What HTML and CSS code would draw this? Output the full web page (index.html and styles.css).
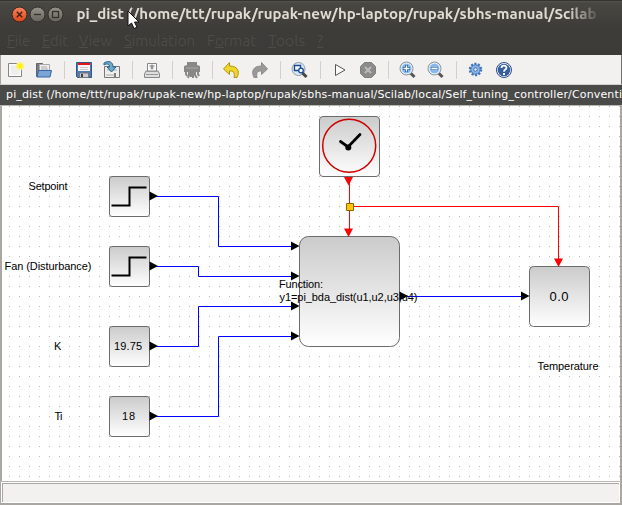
FILE: index.html
```html
<!DOCTYPE html>
<html lang="en">
<head>
<meta charset="utf-8">
<title>pi_dist</title>
<link rel="stylesheet" href="styles.css">
</head>
<body>
<div class="window">
  <header class="chrome">
    <div class="titlebar">
      <div class="controls">
        <svg width="62" height="20" viewBox="0 0 62 20">
          <defs>
            <linearGradient id="orange" x2="0" y2="1"><stop stop-color="#f58560"/><stop offset="1" stop-color="#dc4518"/></linearGradient>
            <linearGradient id="grey" x2="0" y2="1"><stop stop-color="#95938b"/><stop offset="1" stop-color="#65635c"/></linearGradient>
          </defs>
          <circle cx="12.500" cy="10.500" r="7.500" fill="url(#orange)" stroke="#30261f"/>
          <path d="M9.800 7.800l5.400 5.400M15.200 7.800l-5.400 5.400" stroke="#48200f" stroke-width="1.500"/>
          <circle cx="30.500" cy="10.500" r="7.500" fill="url(#grey)" stroke="#302f2b"/>
          <path d="M27 10.500h7" stroke="#33322d" stroke-width="1.300"/>
          <circle cx="48.500" cy="10.500" r="7.500" fill="url(#grey)" stroke="#302f2b"/>
          <rect x="45.500" y="7.500" width="6" height="6" fill="none" stroke="#33322d" stroke-width="1.300"/>
        </svg>
      </div>
      <svg class="title" width="525" height="27"><text x="-0.500" y="18" textLength="520" lengthAdjust="spacingAndGlyphs">pi_dist (/home/ttt/rupak/rupak-new/hp-laptop/rupak/sbhs-manual/Scilab</text></svg>
    </div>
    <svg class="menu" width="340" height="27">
      <g>
        <text x="7" y="18" textLength="23" lengthAdjust="spacingAndGlyphs">File</text>
        <text x="42" y="18" textLength="26" lengthAdjust="spacingAndGlyphs">Edit</text>
        <text x="79" y="18" textLength="33" lengthAdjust="spacingAndGlyphs">View</text>
        <text x="124" y="18" textLength="71" lengthAdjust="spacingAndGlyphs">Simulation</text>
        <text x="207" y="18" textLength="49" lengthAdjust="spacingAndGlyphs">Format</text>
        <text x="268" y="18" textLength="37" lengthAdjust="spacingAndGlyphs">Tools</text>
        <text x="317" y="18" textLength="6" lengthAdjust="spacingAndGlyphs">?</text>
      </g>
      <path d="M7 19.500h8M42 19.500h8M79 19.500h9M124 19.500h8M215 19.500h9M268 19.500h8M317 19.500h6" stroke="#4d4c48"/>
    </svg>
    <svg class="pointer" width="15" height="20" viewBox="0 0 15 20"><path d="M1 1v15l3.500-3 2.500 5.500 3-1.300-2.500-5.200h4.500z" fill="#fff" stroke="#111"/></svg>
  </header>

  <nav class="toolbar">
    <svg class="icon" viewBox="0 0 20 20"><path d="M2.500 3.500h13v13h-13z" fill="#fafafa" stroke="#858585"/><path d="M4.500 5.500h9v9h-9z" fill="#eee"/><circle cx="14" cy="6" r="4" fill="#fbf17a"/><circle cx="14" cy="6" r="2.200" fill="#fff200"/></svg>
    <svg class="icon" viewBox="0 0 20 20"><path d="M2.500 16.500v-13h6l1 2h5v11z" fill="#777b7c" stroke="#626667"/><path d="M5.500 4.500h10v7h-10z" fill="#eee" stroke="#aaa"/><path d="M7 7h6M7 9h7" stroke="#aaa"/><path d="M4.500 10.500h13l-1.500 6.500H3z" fill="#7aa5d6" stroke="#3465a4"/></svg>
    <i class="sep"></i>
    <svg class="icon" viewBox="0 0 20 20"><path d="M2.500 2.500h15v15h-14l-1-1z" fill="#5379ae" stroke="#315786"/><path d="M4 3h12v8H4z" fill="#f5f5f5"/><path d="M4 3h12v2H4z" fill="#e41616"/><path d="M6 7.500h8M6 9.500h8" stroke="#ccc"/><path d="M5.500 13h9v4.500h-9z" fill="#ccc" stroke="#777"/><path d="M7 14h2v3H7z" fill="#345"/></svg>
    <svg class="icon" viewBox="0 0 20 20"><path d="M2.500 6.500h15v11h-15z" fill="#eee" stroke="#777"/><path d="M5 10h10M4 15h8" stroke="#aaa"/><path d="M13 13v4" stroke="#111"/><path d="M2 3c5-3 9-1 9 4h3l-4.500 5L5 7h2.500C7.500 4 5 3 2 5z" fill="#6faac9" stroke="#24658b"/></svg>
    <i class="sep"></i>
    <svg class="icon" viewBox="0 0 20 20"><path d="M5.500 3.500h9v9h-9z" fill="#fafafa" stroke="#888"/><path d="M7.500 6h5M8.500 8h3M10 4.500v5" stroke="#777"/><path d="M4 11h12l1.500 3v3.500h-15V14z" fill="#ddd" stroke="#888"/><path d="M5 11.500h10M4 14.500h12" stroke="#999"/></svg>
    <i class="sep"></i>
    <svg class="icon" viewBox="0 0 20 20"><path d="M5 2h10v3l3 1v6H2V6l3-1z" fill="#888"/><path d="M4 8h12" stroke="#aaa"/><path d="M4 11v3l1 2M7 11v4l-1 3M9 11v6M11 11v7M13 11v4l2 3M16 11v3l1 2" fill="none" stroke="#888" stroke-width="2"/></svg>
    <i class="sep"></i>
    <svg class="icon" viewBox="0 0 20 20"><path d="M7.500 2.500L1.500 9l6 5.500v-3.500c4-.5 5.500 1.500 4.500 6.500h3c3-6 1-11.500-7.500-11.500z" fill="#edd72c" stroke="#b39208"/></svg>
    <svg class="icon" viewBox="0 0 20 20"><path d="M11.500 2.500l6 6.500-6 5.500v-3.500c-4-.5-5.500 1.500-4.500 6.500H4C1 11.500 3 6 11.500 6z" fill="#999" stroke="#8b8b8b"/></svg>
    <i class="sep"></i>
    <svg class="icon" viewBox="0 0 20 20"><circle cx="8.500" cy="9" r="6.500" fill="#d8e8f8" stroke="#929ca4"/><path d="M12.500 13l4 4" stroke="#444" stroke-width="3"/><path d="M4.500 5.500h6v5h-6z" fill="#fff" stroke="#174a93" stroke-width="1.400"/><circle cx="11" cy="10.500" r="2.300" fill="#fff" stroke="#174a93" stroke-width="1.300"/></svg>
    <i class="sep"></i>
    <svg class="icon" viewBox="0 0 20 20"><path d="M5.500 4.500v11L15 10z" fill="#fff" stroke="#555"/></svg>
    <svg class="icon" viewBox="0 0 20 20"><path d="M6.500 2.500h7l4 4v7l-4 4h-7l-4-4v-7z" fill="#8b8b8b" stroke="#808080"/><path d="M7 7l6 6M13 7l-6 6" stroke="#bbb" stroke-width="2"/></svg>
    <i class="sep"></i>
    <svg class="icon" viewBox="0 0 20 20"><path d="M12.500 13l4 4" stroke="#555" stroke-width="3"/><circle cx="8.500" cy="8.500" r="6.500" fill="#dcedfb" stroke="#8d9499"/><circle cx="8.500" cy="8.500" r="4.800" fill="#88b8e8"/><path d="M8.500 5v7M5 8.500h7" stroke="#2461a8" stroke-width="3"/><path d="M8.500 5.500v6M5.500 8.500h6" stroke="#fff" stroke-width="1.300"/></svg>
    <svg class="icon" viewBox="0 0 20 20"><path d="M12.500 13l4 4" stroke="#555" stroke-width="3"/><circle cx="8.500" cy="8.500" r="6.500" fill="#dcedfb" stroke="#8d9499"/><circle cx="8.500" cy="8.500" r="4.800" fill="#88b8e8"/><path d="M5 8.500h7" stroke="#4b84c4" stroke-width="3"/><path d="M5.500 8.500h6" stroke="#fff" stroke-width="1.500"/></svg>
    <i class="sep"></i>
    <svg class="icon" viewBox="0 0 20 20"><circle cx="9.500" cy="9.500" r="5.500" fill="none" stroke="#3d73bb" stroke-width="2.500" stroke-dasharray="2 1.455"/><circle cx="9.500" cy="9.500" r="4.700" fill="#8bb4e4" stroke="#3d73bb"/><circle cx="9.500" cy="9.500" r="1.700" fill="#f2f1f0" stroke="#3d73bb"/></svg>
    <svg class="icon" viewBox="0 0 20 20"><circle cx="10" cy="10" r="7.500" fill="#fff" stroke="#24498a"/><circle cx="10" cy="10" r="6.300" fill="#365f9f"/><path d="M7.500 8c0-3 5-3 5-.3 0 2-2.500 1.700-2.500 4" fill="none" stroke="#fff" stroke-width="1.800"/><path d="M9 13h2v2H9z" fill="#fff"/></svg>
  </nav>

  <svg class="path" width="622" height="20"><text x="6" y="13" textLength="616">pi_dist (/home/ttt/rupak/rupak-new/hp-laptop/rupak/sbhs-manual/Scilab/local/Self_tuning_controller/Conventi</text></svg>

  <main class="canvas">
    <svg class="diagram" width="618" height="375" viewBox="2 106 618 375">
      <defs>
        <pattern id="grid" x="9" y="106" width="10" height="10" patternUnits="userSpaceOnUse"><path d="M0 0h1v1H0z" fill="#b9b9b9"/></pattern>
        <linearGradient id="block" x2="0" y2="1"><stop stop-color="#cbcbcb"/><stop offset="1" stop-color="#fff"/></linearGradient>
        <path id="right" d="M0-4.500L8.500 0 0 4.500z"/>
        <path id="down" d="M-4.500 0h9L0 8.500z" fill="#f00"/>
        <path id="step" d="M2.500 29.500h18v-18h17" fill="none" stroke="#000" stroke-width="2"/>
      </defs>
      <rect x="2" y="106" width="618" height="375" fill="url(#grid)"/>
      <g class="block">
        <rect x="109.500" y="176.500" width="40" height="40" rx="2.500"/>
        <rect x="109.500" y="246.500" width="40" height="40" rx="2.500"/>
        <rect x="109.500" y="326.500" width="40" height="40" rx="2.500"/>
        <rect x="109.500" y="396.500" width="40" height="40" rx="2.500"/>
        <rect x="319.500" y="116.500" width="60" height="60" rx="3.500"/>
        <rect x="299.500" y="236.500" width="100" height="110" rx="9"/>
        <rect x="529.500" y="266.500" width="60" height="60" rx="4"/>
      </g>
      <use href="#step" x="109" y="176"/>
      <use href="#step" x="109" y="246"/>
      <circle cx="349.200" cy="145.800" r="26.500" fill="none" stroke="#cf0000" stroke-width="1.500"/>
      <path d="M340.500 141.500l7.500 5.500 12-12.500" fill="none" stroke="#000" stroke-width="2.800" stroke-linecap="round"/>
      <circle cx="348.300" cy="147.500" r="3"/>
      <g fill="none" stroke="#00f">
        <path d="M156 196.500h62.500v50H292M156 266.500h42.500v10H292M156 346.500h42.500v-40H292M156 416.500h62.500v-80H292M407 296.500h115"/>
        <path d="M349.500 180v50M349.500 206.500h209V260" stroke="#f00"/>
      </g>
      <g>
        <use href="#right" x="149.500" y="196"/><use href="#right" x="149.500" y="266"/>
        <use href="#right" x="149.500" y="346"/><use href="#right" x="149.500" y="416"/>
        <use href="#right" x="291" y="246"/><use href="#right" x="291" y="276"/>
        <use href="#right" x="291" y="306"/><use href="#right" x="291" y="336"/>
        <use href="#right" x="399.500" y="296"/><use href="#right" x="521" y="296"/>
        <use href="#down" x="348.500" y="177"/><use href="#down" x="348.500" y="228.500"/><use href="#down" x="558.500" y="258.500"/>
      </g>
      <path d="M346.500 203.500h7v7h-7z" fill="#ffc400" stroke="#8a6800"/>
      <g class="label">
        <text x="28.500" y="190" textLength="39">Setpoint</text>
        <text x="4.500" y="270" textLength="87">Fan (Disturbance)</text>
        <text x="54" y="350">K</text>
        <text x="54.500" y="420" textLength="8">Ti</text>
        <text x="114" y="350" textLength="28">19.75</text>
        <text x="122" y="420" textLength="13">18</text>
        <text x="279" y="288" textLength="44">Function:</text>
        <text x="279.500" y="301" textLength="138">y1=pi_bda_dist(u1,u2,u3,u4)</text>
        <text x="537.500" y="370" textLength="61">Temperature</text>
        <text class="value" x="549.500" y="301" textLength="19">0.0</text>
      </g>
    </svg>
  </main>
  <footer class="status"></footer>
</div>
</body>
</html>
```

FILE: styles.css
```css
* { box-sizing: border-box; }
body { margin: 0; overflow: hidden; background: #3c3b37; }
svg { display: block; }
.window { width: 622px; height: 505px; display: flex; flex-direction: column; background: #aaa7a3; }
.chrome { position: relative; height: 55px; background: linear-gradient(#55534d 0, #484742 2px, #3d3c38 28px, #3c3b37); border-top: 1px solid #353430; }
.titlebar { display: flex; height: 27px; }
.controls { width: 77px; padding: 3px 0 0 7px; }
.title { font: bold 14px Ubuntu, "Noto Sans", sans-serif; fill: #dfdbd2; -webkit-mask-image: linear-gradient(90deg, #000 490px, transparent 525px); mask-image: linear-gradient(90deg, #000 490px, transparent 525px); }
.menu { font: 300 14px Ubuntu, "Open Sans", sans-serif; fill: #4f4e4a; }
.pointer { position: absolute; left: 127px; top: 9px; }
.toolbar { height: 30px; display: flex; align-items: center; padding-left: 1px; background: #f2f1f0; border-left: 1px solid #aaa7a3; border-right: 1px solid #77746f; border-bottom: 1px solid #d2d0ce; }
.icon { width: 20px; height: 20px; margin: 0 4px; flex: none; }
.sep { width: 1px; height: 18px; margin: 0 5px 0 6px; background: #d2d0ce; }
.path { background: #4a4a49; font: 11px "DejaVu Sans", sans-serif; fill: #fff; }
.canvas { height: 377px; padding-left: 2px; border-bottom: 1px solid #b9b6b3; border-top: 1px solid #b9b6b3; }
.diagram { background: #fff; }
.block rect { fill: url(#block); fill: url("index.html#block"); stroke: #6b6b6b; }
.block rect { fill: url(#block); }
.label { font: 11px "Liberation Sans", sans-serif; fill: #000; }
.label .value { font-size: 13px; }
.status { height: 21px; margin: 0 2px 0 1px; background: #f2f1f0; border: 1px solid #fff; box-shadow: inset 1px 1px #aaa7a3; }
```
